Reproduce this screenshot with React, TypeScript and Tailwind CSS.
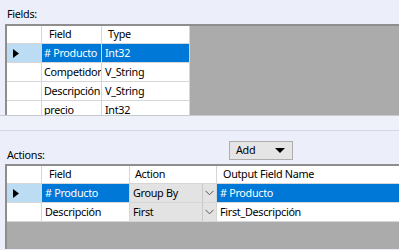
import React from "react";

const font = { fontFamily: '"Noto Sans", sans-serif' };

function Arrow() {
  return (
    <svg width="6" height="9" viewBox="0 0 6 9" className="block">
      <path d="M0 0 L6 4.5 L0 9 Z" fill="#000" />
    </svg>
  );
}

function Chevron() {
  return (
    <svg width="9" height="6" viewBox="0 0 9 6" className="block">
      <path d="M0.5 0.8 L4.5 4.8 L8.5 0.8" fill="none" stroke="#555" strokeWidth="1" />
    </svg>
  );
}

export default function App() {
  return (
    <div
      className="w-[399px] h-[250px] bg-[#ECEFF9] overflow-hidden text-[10.8px] tracking-[-0.3px] text-black leading-none"
      style={font}
    >
      {/* Fields label */}
      <div className="h-[24px] pl-[7px] flex items-end pb-[4px] text-[#000]">Fields:</div>
      {/* Fields grid */}
      <div className="ml-[5px] h-[91px] border-t-2 border-l-2 border-[#8E8E8E] bg-[#ABABAB] overflow-hidden">
        {/* header */}
        <div className="flex h-[18px]">
          <div className="w-[35px] bg-white border-r border-b border-[#D6D6D6]" />
          <div className="w-[60px] bg-white border-r border-b border-[#D6D6D6] pl-[7px] flex items-center">Field</div>
          <div className="w-[88px] bg-white border-r border-b border-[#D6D6D6] pl-[6px] flex items-center">Type</div>
        </div>
        {[
          ["# Producto", "Int32", true],
          ["Competidor", "V_String", false],
          ["Descripción", "V_String", false],
          ["precio", "Int32", false],
        ].map(([f, t, sel], i) => (
          <div key={i} className="flex h-[19px]">
            <div
              className={
                "w-[35px] border-r border-b border-[#D6D6D6] flex items-center pl-[6px] " +
                (sel ? "bg-[#BCDCF4]" : "bg-white")
              }
            >
              {sel ? <Arrow /> : null}
            </div>
            <div
              className={
                "w-[60px] border-r border-b border-[#D6D6D6] pl-[2px] flex items-center whitespace-nowrap overflow-hidden " +
                (sel ? "bg-[#0078D7] text-white" : "bg-white")
              }
            >
              {f as string}
            </div>
            <div
              className={
                "w-[88px] border-r border-b border-[#D6D6D6] pl-[3px] flex items-center whitespace-nowrap " +
                (sel ? "bg-[#0078D7] text-white" : "bg-white")
              }
            >
              {t as string}
            </div>
          </div>
        ))}
      </div>
      {/* splitter */}
      <div className="h-[16px] border-t border-[#C6C9CE] border-b border-b-[#D5D8E2] bg-[#EEF1FA]" />
      {/* Actions label + Add */}
      <div className="h-[33px] flex">
        <div className="w-[229px] pl-[7px] flex items-end pb-[3px]">Actions:</div>
        <div className="mt-[10px] w-[64px] h-[19px] border border-[#ADADAD] bg-[#E5E5E5] flex items-center justify-between pl-[6px] pr-[7px]">
          <span>Add</span>
          <svg width="10" height="5" viewBox="0 0 10 5" className="block">
            <path d="M0 0 L10 0 L5 5 Z" fill="#000" />
          </svg>
        </div>
      </div>
      {/* Actions grid */}
      <div className="ml-[5px] h-[85px] border-t-2 border-l-2 border-[#8E8E8E] bg-[#ABABAB] overflow-hidden">
        <div className="flex h-[18px]">
          <div className="w-[35px] bg-white border-r border-b border-[#D6D6D6]" />
          <div className="w-[88px] bg-white border-r border-b border-[#D6D6D6] pl-[7px] flex items-center">Field</div>
          <div className="w-[87px] bg-white border-r border-b border-[#D6D6D6] pl-[5px] flex items-center">Action</div>
          <div className="flex-1 bg-white border-b border-[#D6D6D6] pl-[6px] flex items-center">Output Field Name</div>
        </div>
        {[
          ["# Producto", "Group By", "# Producto", true],
          ["Descripción", "First", "First_Descripción", false],
        ].map(([f, a, o, sel], i) => (
          <div key={i} className="flex h-[19px]">
            <div
              className={
                "w-[35px] border-r border-b border-[#D6D6D6] flex items-center pl-[6px] " +
                (sel ? "bg-[#BCDCF4]" : "bg-white")
              }
            >
              {sel ? <Arrow /> : null}
            </div>
            <div
              className={
                "w-[88px] border-r border-b border-[#D6D6D6] pl-[3px] flex items-center whitespace-nowrap " +
                (sel ? "bg-[#0078D7] text-white" : "bg-white")
              }
            >
              {f as string}
            </div>
            <div className="w-[87px] border-r border-b border-[#D6D6D6] bg-[#E3E3E3] flex">
              <div className="flex-1 pl-[3px] flex items-center whitespace-nowrap">{a as string}</div>
              <div className="w-[14px] border-l border-[#C8C8C8] flex items-center justify-center">
                <Chevron />
              </div>
            </div>
            <div
              className={
                "flex-1 border-b border-[#D6D6D6] pl-[3px] flex items-center whitespace-nowrap " +
                (sel ? "bg-[#0078D7] text-white" : "bg-white")
              }
            >
              {o as string}
            </div>
          </div>
        ))}
      </div>
    </div>
  );
}
